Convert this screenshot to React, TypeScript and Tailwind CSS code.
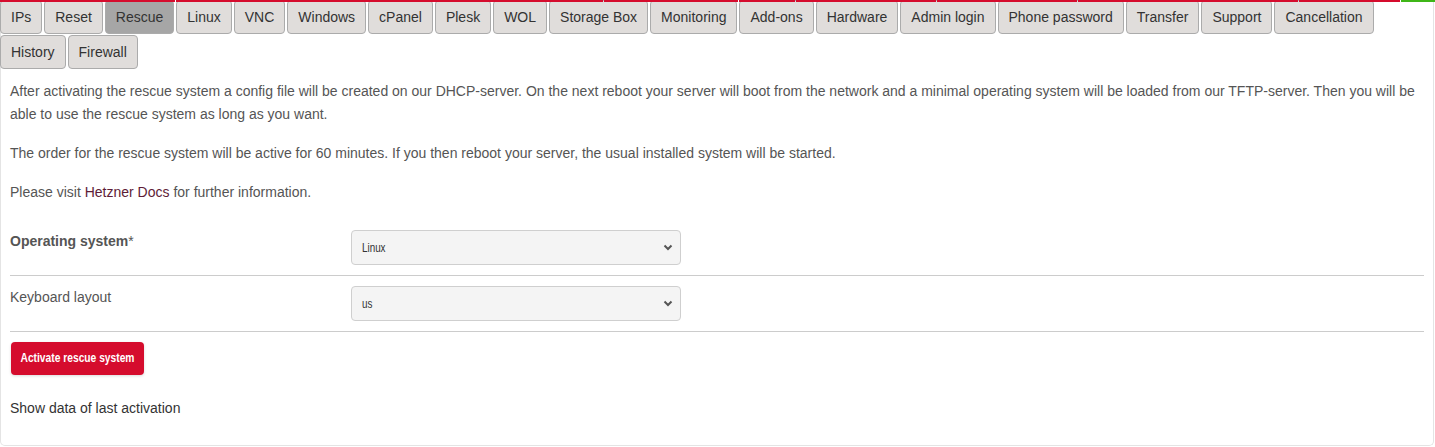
import React from "react";

const tabs = [
  "IPs","Reset","Rescue","Linux","VNC","Windows","cPanel","Plesk","WOL","Storage Box","Monitoring","Add-ons","Hardware","Admin login","Phone password","Transfer","Support","Cancellation","History","Firewall",
];

const redSegs = [175, 427, 134, 56, 140, 140, 220, 101];

function Chevron() {
  return (
    <svg width="10" height="7" viewBox="0 0 10 7" className="text-[#555]">
      <path d="M1.5 1.5 L5 5 L8.5 1.5" fill="none" stroke="currentColor" strokeWidth="2" />
    </svg>
  );
}

function FakeSelect({ value }: { value: string }) {
  return (
    <div className="w-[330px] h-[35px] bg-[#f4f4f4] border border-[#cfcfcf] rounded-[4px] flex items-center justify-between pl-[10px] pr-[7px]">
      <span className="inline-block origin-left scale-x-[0.82] text-[12px] text-[#333]">{value}</span>
      <Chevron />
    </div>
  );
}

export default function App() {
  return (
    <div className="relative w-[1435px] h-[447px] bg-white overflow-hidden" style={{ fontFamily: '"Liberation Sans", Arial, sans-serif' }}>
      <div className="w-[1434px] h-[446px] border border-t-0 border-[#e4e4e4] rounded-b-[5px]">
        <div className="flex flex-wrap gap-x-[2px] gap-y-px -ml-px">
          {tabs.map((t) => (
            <div
              key={t}
              className={
                "h-[34px] px-[10px] flex items-center border border-[#ababab] rounded-[4px] text-[14px] " +
                (t === "Rescue" ? "bg-[#a6a6a6] text-[#333]" : "bg-[#e0dddb] text-[#333]")
              }
            >
              {t}
            </div>
          ))}
        </div>
        <div className="px-[9px] text-[14px] text-[#555]">
          <p className="mt-[11px] leading-[23px] mb-[16px]">
            After activating the rescue system a config file will be created on our DHCP-server. On the next reboot your server will boot from the network and a minimal operating system will be loaded from our TFTP-server. Then you will be able to use the rescue system as long as you want.
          </p>
          <p className="leading-[23px] mb-[16px]">
            The order for the rescue system will be active for 60 minutes. If you then reboot your server, the usual installed system will be started.
          </p>
          <p className="leading-[23px]">
            Please visit <span className="text-[#5e1c36]">Hetzner Docs</span> for further information.
          </p>
          <div className="mt-[16px]">
            <div className="flex py-[10px] border-b border-[#cccccc]">
              <div className="w-[341px] leading-[22px]"><span className="font-bold">Operating system</span>*</div>
              <FakeSelect value="Linux" />
            </div>
            <div className="flex py-[10px] border-b border-[#cccccc]">
              <div className="w-[341px] leading-[22px]">Keyboard layout</div>
              <FakeSelect value="us" />
            </div>
          </div>
          <div className="mt-[10px] ml-px">
            <button className="h-[33px] w-[133px] bg-[#d50c2d] text-white rounded-[4px] shadow-[0_1px_3px_rgba(0,0,0,0.15)] flex items-center justify-center whitespace-nowrap">
              <span className="inline-block scale-x-[0.82] font-bold text-[12.5px] whitespace-nowrap">Activate rescue system</span>
            </button>
          </div>
          <div className="mt-[22px] leading-[22px] text-[#333]">Show data of last activation</div>
        </div>
      </div>
      <div className="absolute top-0 left-0 w-[1435px] h-[2px] flex gap-px">
        {redSegs.map((w, i) => (
          <div key={i} className="h-full bg-[#d50c2d]" style={{ width: w }} />
        ))}
        <div className="h-full flex-1 bg-[#3fb618]" />
      </div>
    </div>
  );
}
